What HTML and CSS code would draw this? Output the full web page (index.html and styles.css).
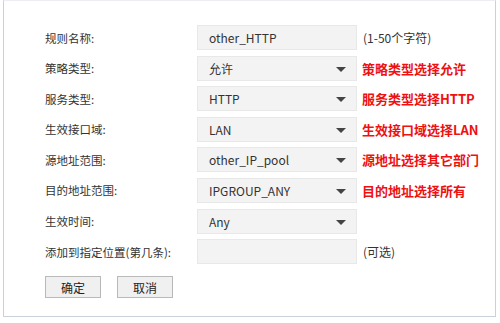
FILE: index.html
```html
<!DOCTYPE html>
<html>
  <head>
    <meta charset="utf-8" />
    <title>规则设置</title>
    <link rel="stylesheet" href="styles.css">
  </head>
  <body>
    <div class="frame">
      <div class="form">
        <div class="row">
          <label class="label">规则名称:</label>
          <div class="field">other_HTTP</div>
          <span class="hint">(1-50个字符)</span>
        </div>
        <div class="row">
          <label class="label">策略类型:</label>
          <div class="field select">允许<i class="arrow"></i></div>
          <span class="note">策略类型选择允许</span>
        </div>
        <div class="row">
          <label class="label">服务类型:</label>
          <div class="field select">HTTP<i class="arrow"></i></div>
          <span class="note">服务类型选择HTTP</span>
        </div>
        <div class="row">
          <label class="label">生效接口域:</label>
          <div class="field select">LAN<i class="arrow"></i></div>
          <span class="note">生效接口域选择LAN</span>
        </div>
        <div class="row">
          <label class="label">源地址范围:</label>
          <div class="field select">other_IP_pool<i class="arrow"></i></div>
          <span class="note">源地址选择其它部门</span>
        </div>
        <div class="row">
          <label class="label">目的地址范围:</label>
          <div class="field select">IPGROUP_ANY<i class="arrow"></i></div>
          <span class="note">目的地址选择所有</span>
        </div>
        <div class="row">
          <label class="label">生效时间:</label>
          <div class="field select">Any<i class="arrow"></i></div>
        </div>
        <div class="row">
          <label class="label">添加到指定位置(第几条):</label>
          <div class="field"></div>
          <span class="hint">(可选)</span>
        </div>
      </div>
      <div class="actions">
        <button class="btn">确定</button>
        <button class="btn">取消</button>
      </div>
    </div>
  </body>
</html>
```

FILE: styles.css
```css
body {
  margin: 0;
  background: #fff;
  font-family: "Noto Sans CJK SC", "Noto Sans", sans-serif;
  font-size: 12px;
  color: #333;
}
.frame {
  width: 493px;
  height: 317px;
  margin-left: 3px;
  border-top: 1px solid #eceef1;
  border-left: 1px solid #c9d1db;
  border-right: 1px solid #c9d1db;
  border-bottom: 1px solid #c9d1db;
  box-sizing: border-box;
  padding: 24px 0 0 41px;
}
.row {
  display: flex;
  align-items: center;
  height: 25px;
  margin-bottom: 5.6px;
}
.label {
  width: 152px;
  font-size: 11.5px;
  color: #333;
}
.field {
  position: relative;
  width: 160px;
  height: 25px;
  box-sizing: border-box;
  background: #f3f3f3;
  border: 1px solid #e8e8e8;
  padding-left: 11px;
  line-height: 23px;
  color: #333;
}
.arrow {
  position: absolute;
  right: 10px;
  top: 10px;
  width: 0;
  height: 0;
  border-left: 5px solid transparent;
  border-right: 5px solid transparent;
  border-top: 5px solid #444;
}
.hint {
  margin-left: 6px;
  color: #333;
}
.note {
  margin-left: 5px;
  color: #ee1111;
  font-size: 13px;
  font-weight: bold;
}
.actions {
  display: flex;
  gap: 16px;
  margin-top: 12px;
}
.btn {
  width: 56px;
  height: 22px;
  padding: 0;
  background: #f0f0f0;
  border: 1px solid #b9b9b9;
  font-family: inherit;
  font-size: 12px;
  color: #222;
}
```
